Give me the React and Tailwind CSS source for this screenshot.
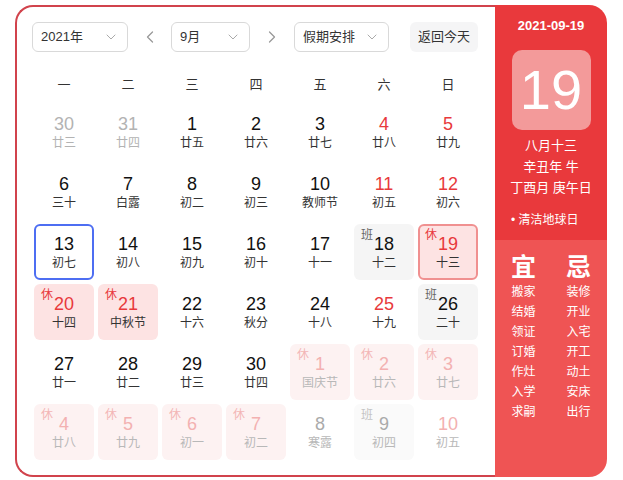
import { ChevronDown, ChevronLeft, ChevronRight } from 'lucide-react';

const FONT = { fontFamily: '"Liberation Sans", Arial, "Noto Sans CJK SC", sans-serif' };

// kind: prev | normal | next ; tag: 休 | 班
const rows = [
  [
    { d: 30, l: '廿三', kind: 'prev' },
    { d: 31, l: '廿四', kind: 'prev' },
    { d: 1, l: '廿五' },
    { d: 2, l: '廿六' },
    { d: 3, l: '廿七' },
    { d: 4, l: '廿八', red: true },
    { d: 5, l: '廿九', red: true },
  ],
  [
    { d: 6, l: '三十' },
    { d: 7, l: '白露' },
    { d: 8, l: '初二' },
    { d: 9, l: '初三' },
    { d: 10, l: '教师节' },
    { d: 11, l: '初五', red: true },
    { d: 12, l: '初六', red: true },
  ],
  [
    { d: 13, l: '初七', selected: true },
    { d: 14, l: '初八' },
    { d: 15, l: '初九' },
    { d: 16, l: '初十' },
    { d: 17, l: '十一' },
    { d: 18, l: '十二', tag: '班' },
    { d: 19, l: '十三', tag: '休', red: true, today: true },
  ],
  [
    { d: 20, l: '十四', tag: '休', red: true },
    { d: 21, l: '中秋节', tag: '休', red: true },
    { d: 22, l: '十六' },
    { d: 23, l: '秋分' },
    { d: 24, l: '十八' },
    { d: 25, l: '十九', red: true },
    { d: 26, l: '二十', tag: '班' },
  ],
  [
    { d: 27, l: '廿一' },
    { d: 28, l: '廿二' },
    { d: 29, l: '廿三' },
    { d: 30, l: '廿四' },
    { d: 1, l: '国庆节', kind: 'next', tag: '休' },
    { d: 2, l: '廿六', kind: 'next', tag: '休' },
    { d: 3, l: '廿七', kind: 'next', tag: '休' },
  ],
  [
    { d: 4, l: '廿八', kind: 'next', tag: '休' },
    { d: 5, l: '廿九', kind: 'next', tag: '休' },
    { d: 6, l: '初一', kind: 'next', tag: '休' },
    { d: 7, l: '初二', kind: 'next', tag: '休' },
    { d: 8, l: '寒露', kind: 'next' },
    { d: 9, l: '初四', kind: 'next', tag: '班' },
    { d: 10, l: '初五', kind: 'next', red: true },
  ],
];

const yi = ['搬家', '结婚', '领证', '订婚', '作灶', '入学', '求嗣'];
const ji = ['装修', '开业', '入宅', '开工', '动土', '安床', '出行'];

function Select({ label, width }) {
  return (
    <div
      className="h-[30px] border border-[#d9d9d9] rounded-[6px] flex items-center justify-between pl-[8px] pr-[8px] text-[13px] text-[#333]"
      style={{ width }}
    >
      <span>{label}</span>
      <ChevronDown className="w-[16px] h-[16px] text-[#aaa]" strokeWidth={1.5} />
    </div>
  );
}

function Cell({ c }) {
  const next = c.kind === 'next';
  const prev = c.kind === 'prev';
  let box = 'bg-white';
  let num = 'text-[#111]';
  let lunar = 'text-[#333]';
  let tagColor = 'text-[#e8393c]';

  if (c.tag === '休') box = next ? 'bg-[#fdf2f2]' : 'bg-[#fde3e3]';
  if (c.tag === '班') box = next ? 'bg-[#fafafa]' : 'bg-[#f5f5f5]';
  if (c.red) num = 'text-[#e8393c]';
  if (c.tag === '班') tagColor = next ? 'text-[#c4c4c4]' : 'text-[#666]';
  if (prev) {
    num = 'text-[#b3b3b3]';
    lunar = 'text-[#b3b3b3]';
  }
  if (next) {
    num = c.tag === '休' || c.red ? 'text-[#f3b1b1]' : 'text-[#aaa]';
    lunar = 'text-[#b8b8b8]';
    if (c.tag === '休') tagColor = 'text-[#f3b6b6]';
  }

  const border = c.selected
    ? 'border-2 border-[#4e6ef2]'
    : c.today
    ? 'border-2 border-[#f09090]'
    : 'border-2 border-transparent';

  return (
    <div className={`relative h-[56px] rounded-[6px] flex flex-col items-center pt-[7px] ${box} ${border}`}>
      {c.tag && (
        <span className={`absolute left-[5px] top-[2px] text-[12px] leading-[14px] ${tagColor}`}>{c.tag}</span>
      )}
      <span className={`text-[18px] leading-[22px] ${num}`}>{c.d}</span>
      <span className={`text-[12px] leading-[16px] ${lunar}`}>{c.l}</span>
    </div>
  );
}

export default function App() {
  return (
    <div className="w-[623px] h-[480px] bg-white pt-[5px] pl-[15px]" style={FONT}>
      <div className="flex w-[592px] h-[472px]">
        {/* calendar */}
        <div className="w-[480px] h-full border-y-2 border-l-2 border-[#d1434c] rounded-l-[18px] pt-[15px] pl-[15px]">
          <div className="flex items-center">
            <Select label="2021年" width={96} />
            <div className="w-[43px] flex justify-center">
              <ChevronLeft className="w-[20px] h-[20px] text-[#999]" strokeWidth={1.5} />
            </div>
            <Select label="9月" width={79} />
            <div className="w-[44px] flex justify-center">
              <ChevronRight className="w-[20px] h-[20px] text-[#999]" strokeWidth={1.5} />
            </div>
            <Select label="假期安排" width={95} />
            <div className="ml-[21px] w-[68px] h-[30px] rounded-[6px] bg-[#f5f5f6] flex items-center justify-center text-[13px] text-[#333]">
              返回今天
            </div>
          </div>

          <div className="mt-[18px] grid grid-cols-7 w-[448px] h-[30px] items-center text-[13px] text-[#333]">
            {['一', '二', '三', '四', '五', '六', '日'].map((w) => (
              <div key={w} className="text-center">{w}</div>
            ))}
          </div>

          <div className="mt-[4px] ml-[2px] grid grid-cols-[repeat(7,60px)] gap-x-[4px] gap-y-[4px]">
            {rows.flat().map((c, i) => (
              <Cell key={i} c={c} />
            ))}
          </div>
        </div>

        {/* side panel */}
        <div className="w-[112px] h-full rounded-r-[18px] overflow-hidden flex flex-col text-white">
          <div className="bg-[#e9393c] h-[235px] flex flex-col items-center pt-[12px]">
            <div className="text-[13px] leading-[18px] font-bold">2021-09-19</div>
            <div className="mt-[15px] w-[79px] h-[80px] rounded-[10px] bg-[#f39a9a] flex items-center justify-center text-[56px] leading-none">
              19
            </div>
            <div className="mt-[5px] text-[13px] leading-[21px] text-center">
              <div>八月十三</div>
              <div>辛丑年 牛</div>
              <div>丁酉月 庚午日</div>
            </div>
            <div className="mt-[14px] self-start pl-[16px] text-[12px] leading-[16px]">• 清洁地球日</div>
          </div>
          <div className="flex-1 bg-[#ef5454] flex justify-between px-[16px] pt-[12px]">
            {[['宜', yi], ['忌', ji]].map(([h, list]) => (
              <div key={h} className="flex flex-col items-center">
                <div className="text-[25px] leading-[30px] font-bold">{h}</div>
                {list.map((t) => (
                  <div key={t} className="text-[12px] leading-[20px]">{t}</div>
                ))}
              </div>
            ))}
          </div>
        </div>
      </div>
    </div>
  );
}
